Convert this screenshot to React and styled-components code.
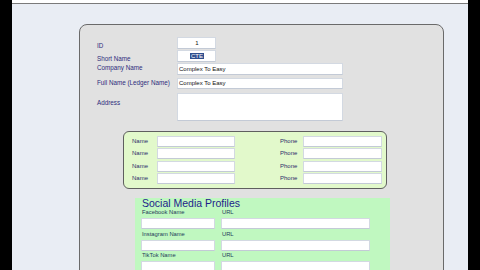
import React from "react";
import styled, { createGlobalStyle } from "styled-components";

const GlobalStyle = createGlobalStyle`
  * { box-sizing: border-box; }
  html, body {
    margin: 0;
    height: 270px;
    overflow: hidden;
    background: #000;
    font-family: "Liberation Sans", Arial, sans-serif;
  }
`;

const contacts = [0, 1, 2, 3];
const socials = ["Facebook Name", "Instagram Name", "TikTok Name"];

export default function App() {
  return (
    <Screen>
      <GlobalStyle />
      <Edge />
      <Main>
        <TopBar />
        <Desk>
          <Card>
            <Form>
              <Row space={0}>
                <Label dy={3}>ID</Label>
                <Field width={39} height={12} center>1</Field>
              </Row>
              <Row space={1}>
                <Label dy={3}>Short Name</Label>
                <Field width={39} height={12} center>
                  <Selected>CTE</Selected>
                </Field>
              </Row>
              <Row space={1}>
                <Label dy={-1}>Company Name</Label>
                <Field width={166} height={12}>Complex To Easy</Field>
              </Row>
              <Row space={3}>
                <Label dy={-1}>Full Name (Ledger Name)</Label>
                <Field width={166} height={11}>Complex To Easy</Field>
              </Row>
              <Row space={3}>
                <Label dy={4}>Address</Label>
                <Field width={166} height={28} />
              </Row>
            </Form>

            <ContactBox>
              {contacts.map((i) => (
                <React.Fragment key={i}>
                  <SmallLabel>Name</SmallLabel>
                  <Field width={78} height={11} />
                  <span />
                  <SmallLabel>Phone</SmallLabel>
                  <Field width={79} height={11} />
                </React.Fragment>
              ))}
            </ContactBox>

            <SocialBox>
              <Title>Social Media Profiles</Title>
              {socials.map((s) => (
                <SocialGroup key={s}>
                  <SocialLabel>{s}</SocialLabel>
                  <SocialLabel>URL</SocialLabel>
                  <Field width={74} height={11} />
                  <Field width={149} height={11} />
                </SocialGroup>
              ))}
            </SocialBox>
          </Card>
        </Desk>
      </Main>
      <Edge />
    </Screen>
  );
}

const Screen = styled.div`
  display: flex;
  width: 480px;
  height: 270px;
  overflow: hidden;
`;
const Edge = styled.div`
  width: 12px;
  flex-shrink: 0;
  background: #000;
`;
const Main = styled.div`
  flex: 1;
  display: flex;
  flex-direction: column;
  background: #e9edf4;
`;
const TopBar = styled.div`
  height: 4px;
  flex-shrink: 0;
  background: #fff;
  border-bottom: 1px solid #7a7a7a;
`;
const Desk = styled.div`
  flex: 1;
  padding: 20px 0 0 67px;
`;
const Card = styled.div`
  width: 365px;
  height: 300px;
  background: #e1e1e1;
  border: 1px solid #6a6a6a;
  border-radius: 8px 8px 0 0;
  padding: 12px 0 0 0;
`;
const Form = styled.div`
  display: flex;
  flex-direction: column;
  padding-left: 17px;
`;
const Row = styled.div`
  display: flex;
  align-items: flex-start;
  margin-top: ${(p) => p.space}px;
`;
const Label = styled.div`
  width: 80px;
  font-size: 6.3px;
  line-height: 12px;
  color: #2d2d7c;
  transform: translateY(${(p) => p.dy}px);
`;
const Field = styled.div`
  width: ${(p) => p.width}px;
  height: ${(p) => p.height}px;
  background: #fff;
  border: 1px solid #d3d9e2;
  border-bottom-color: #c3cad6;
  font-size: 6px;
  line-height: ${(p) => p.height - 2}px;
  color: #111;
  padding-left: 1px;
  text-align: ${(p) => (p.center ? "center" : "left")};
  white-space: nowrap;
  overflow: hidden;
`;
const Selected = styled.span`
  background: #2f4f8f;
  color: #fff;
  padding: 0 1px;
`;
const ContactBox = styled.div`
  margin: 10px 0 0 43px;
  width: 264px;
  height: 58px;
  background: #e2f9cb;
  border: 1px solid #5f5f5f;
  border-radius: 6px;
  padding: 3.5px 0 0 8px;
  display: grid;
  grid-template-columns: 25px 78px 45px 23px 79px;
  grid-auto-rows: 11px;
  row-gap: 1.5px;
`;
const SmallLabel = styled.div`
  font-size: 6px;
  line-height: 11px;
  color: #2c2c6a;
`;
const SocialBox = styled.div`
  margin: 14px 0 0 55px;
  width: 255px;
  height: 100px;
  background: #c0f8c0;
  padding: 0 20px 0 6px;
`;
const Title = styled.div`
  margin-top: -5px;
  padding-left: 1px;
  font-size: 10.5px;
  line-height: 11px;
  color: #1d1d8a;
`;
const SocialGroup = styled.div`
  display: grid;
  grid-template-columns: 74px 149px;
  column-gap: 6px;
  grid-template-rows: 7px 11px;
  row-gap: 2px;
  margin-bottom: 1.5px;
`;
const SocialLabel = styled.div`
  font-size: 5.8px;
  line-height: 7px;
  color: #1f3a5a;
  padding-left: 1px;
`;
